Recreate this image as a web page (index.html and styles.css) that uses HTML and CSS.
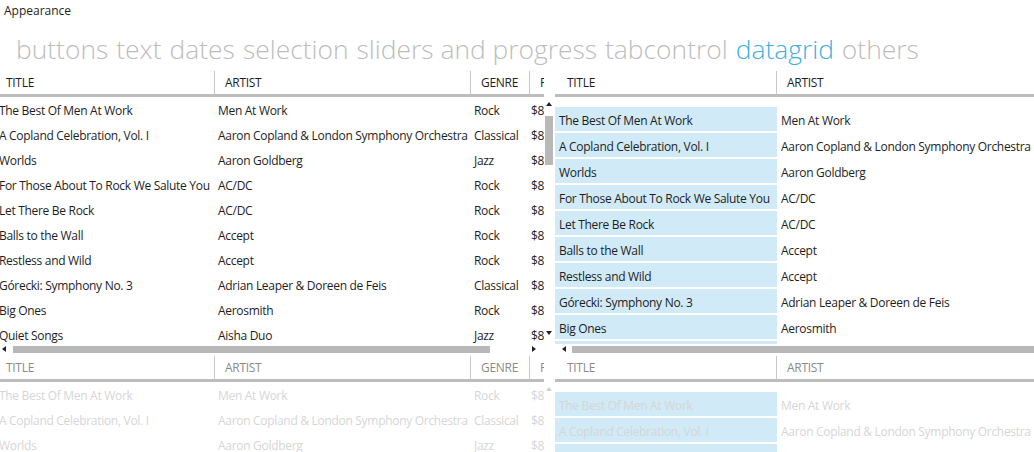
FILE: index.html
```html
<!DOCTYPE html>
<html lang="en">
<head>
  <meta charset="UTF-8" />
  <title>Appearance</title>
  <link rel="stylesheet" href="styles.css">
</head>
<body>
  <!-- Window title -->
  <div class="app-title">Appearance</div>
  <!-- Pivot headers -->
  <nav class="pivot">
    <span>buttons</span>
    <span>text</span>
    <span>dates</span>
    <span>selection</span>
    <span>sliders and progress</span>
    <span>tabcontrol</span>
    <span class="active">datagrid</span>
    <span>others</span>
  </nav>
  <main class="grids">
    <!-- Albums grid, plain -->
    <section class="grid albums">
      <div class="head"><div class="cols">
        <div class="hc c-title">TITLE</div><div class="hc c-artist">ARTIST</div><div class="hc c-genre">GENRE</div><div class="hc c-price">PRICE</div>
      </div></div>
      <div class="corner"></div>
      <div class="body"><div class="cols-wrap">
        <div class="row"><div class="c-title">The Best Of Men At Work</div><div class="c-artist">Men At Work</div><div class="c-genre">Rock</div><div class="c-price">$8.99</div></div>
        <div class="row"><div class="c-title">A Copland Celebration, Vol. I</div><div class="c-artist">Aaron Copland &amp; London Symphony Orchestra</div><div class="c-genre">Classical</div><div class="c-price">$8.99</div></div>
        <div class="row"><div class="c-title">Worlds</div><div class="c-artist">Aaron Goldberg</div><div class="c-genre">Jazz</div><div class="c-price">$8.99</div></div>
        <div class="row"><div class="c-title">For Those About To Rock We Salute You</div><div class="c-artist">AC/DC</div><div class="c-genre">Rock</div><div class="c-price">$8.99</div></div>
        <div class="row"><div class="c-title">Let There Be Rock</div><div class="c-artist">AC/DC</div><div class="c-genre">Rock</div><div class="c-price">$8.99</div></div>
        <div class="row"><div class="c-title">Balls to the Wall</div><div class="c-artist">Accept</div><div class="c-genre">Rock</div><div class="c-price">$8.99</div></div>
        <div class="row"><div class="c-title">Restless and Wild</div><div class="c-artist">Accept</div><div class="c-genre">Rock</div><div class="c-price">$8.99</div></div>
        <div class="row"><div class="c-title">Górecki: Symphony No. 3</div><div class="c-artist">Adrian Leaper &amp; Doreen de Feis</div><div class="c-genre">Classical</div><div class="c-price">$8.99</div></div>
        <div class="row"><div class="c-title">Big Ones</div><div class="c-artist">Aerosmith</div><div class="c-genre">Rock</div><div class="c-price">$8.99</div></div>
        <div class="row"><div class="c-title">Quiet Songs</div><div class="c-artist">Aisha Duo</div><div class="c-genre">Jazz</div><div class="c-price">$8.99</div></div>
      </div></div>
      <div class="vscroll">
        <span class="arrow up"></span>
        <span class="vthumb"></span>
        <span class="arrow down"></span>
      </div>
      <div class="hscroll">
        <span class="arrow left"></span>
        <span class="hthumb"></span>
        <span class="arrow right"></span>
      </div>
      <div class="corner"></div>
    </section>

    <!-- Tiles grid, plain -->
    <section class="grid tiles">
      <div class="head"><div class="cols">
        <div class="hc t-title">TITLE</div><div class="hc t-artist">ARTIST</div>
      </div></div>
      <div class="body">
        <div class="row"><div class="t-title">The Best Of Men At Work</div><div class="t-artist">Men At Work</div></div>
        <div class="row"><div class="t-title">A Copland Celebration, Vol. I</div><div class="t-artist">Aaron Copland &amp; London Symphony Orchestra</div></div>
        <div class="row"><div class="t-title">Worlds</div><div class="t-artist">Aaron Goldberg</div></div>
        <div class="row"><div class="t-title">For Those About To Rock We Salute You</div><div class="t-artist">AC/DC</div></div>
        <div class="row"><div class="t-title">Let There Be Rock</div><div class="t-artist">AC/DC</div></div>
        <div class="row"><div class="t-title">Balls to the Wall</div><div class="t-artist">Accept</div></div>
        <div class="row"><div class="t-title">Restless and Wild</div><div class="t-artist">Accept</div></div>
        <div class="row"><div class="t-title">Górecki: Symphony No. 3</div><div class="t-artist">Adrian Leaper &amp; Doreen de Feis</div></div>
        <div class="row"><div class="t-title">Big Ones</div><div class="t-artist">Aerosmith</div></div>
        <div class="row"><div class="t-title"></div><div class="t-artist"></div></div>
      </div>
      <div class="hscroll">
        <span class="arrow left"></span>
        <span class="hthumb"></span>
      </div>
    </section>

    <!-- Albums grid, disabled -->
    <section class="grid albums disabled">
      <div class="head"><div class="cols">
        <div class="hc c-title">TITLE</div><div class="hc c-artist">ARTIST</div><div class="hc c-genre">GENRE</div><div class="hc c-price">PRICE</div>
      </div></div>
      <div class="corner"></div>
      <div class="body"><div class="cols-wrap">
        <div class="row"><div class="c-title">The Best Of Men At Work</div><div class="c-artist">Men At Work</div><div class="c-genre">Rock</div><div class="c-price">$8.99</div></div>
        <div class="row"><div class="c-title">A Copland Celebration, Vol. I</div><div class="c-artist">Aaron Copland &amp; London Symphony Orchestra</div><div class="c-genre">Classical</div><div class="c-price">$8.99</div></div>
        <div class="row"><div class="c-title">Worlds</div><div class="c-artist">Aaron Goldberg</div><div class="c-genre">Jazz</div><div class="c-price">$8.99</div></div>
      </div></div>
      <div class="vscroll">
        <span class="arrow up"></span>
      </div>
    </section>

    <!-- Tiles grid, disabled -->
    <section class="grid tiles disabled">
      <div class="head"><div class="cols">
        <div class="hc t-title">TITLE</div><div class="hc t-artist">ARTIST</div>
      </div></div>
      <div class="body">
        <div class="row"><div class="t-title">The Best Of Men At Work</div><div class="t-artist">Men At Work</div></div>
        <div class="row"><div class="t-title">A Copland Celebration, Vol. I</div><div class="t-artist">Aaron Copland &amp; London Symphony Orchestra</div></div>
        <div class="row"><div class="t-title"></div><div class="t-artist"></div></div>
      </div>
    </section>
  </main>
</body>
</html>
```

FILE: styles.css
```css
html, body {
  height: 100%;
}
body {
  margin: 0;
  font-family: "Open Sans", "Noto Sans", sans-serif;
  font-size: 12px;
  letter-spacing: -0.3px;
  color: #1e1e1e;
  background: #fff;
  overflow: hidden;
}
.app-title {
  padding: 3px 4px;
  line-height: 16px;
  letter-spacing: 0;
}
/* Pivot headers */
.pivot {
  display: flex;
  gap: 8px;
  height: 49px;
  padding: 5px 0 0 16px;
  box-sizing: border-box;
  font-size: 26.4px;
  font-weight: 300;
  line-height: 44px;
  letter-spacing: 0;
  color: #bdbdbd;
  white-space: nowrap;
}
.pivot .active {
  color: #3fb0e3;
}
/* Grid layout */
.grids {
  display: grid;
  grid-template-columns: 553px 1fr;
  grid-template-rows: 285px 96px;
  column-gap: 2px;
}
.grid {
  display: grid;
  grid-template-rows: 26px 247px 10px;
  overflow: hidden;
  min-width: 0;
}
.grid.disabled {
  grid-template-rows: 26px 70px;
}
.grid.albums {
  grid-template-columns: 544px 9px;
}
.grid.tiles {
  grid-template-columns: 1fr;
}
.head {
  border-bottom: 3px solid #bdbdbd;
  overflow: hidden;
  white-space: nowrap;
}
.cols {
  display: flex;
  height: 23px;
  line-height: 23px;
}
.albums .cols,
.albums .cols-wrap {
  margin-left: -4px;
}
.hc {
  flex: none;
  box-sizing: border-box;
  padding-left: 10px;
  border-right: 1px solid #c8c8c8;
  overflow: hidden;
}
.body {
  overflow: hidden;
  white-space: nowrap;
}
.albums .body {
  padding-top: 1px;
}
.tiles .body {
  padding-top: 10px;
}
.row {
  display: flex;
  height: 25px;
  line-height: 25px;
}
.row > div {
  flex: none;
  box-sizing: border-box;
  padding-left: 3px;
  overflow: hidden;
}
/* Album columns (price is cut by the scroll viewport) */
.c-title { width: 219px; }
.c-artist { width: 256px; }
.c-genre { width: 59px; }
.c-price { width: 14px; }
.hc.c-price { border-right: none; }
.row .c-price { padding-left: 1px; }
/* Tile columns */
.tiles .row {
  height: 26px;
  line-height: 24px;
}
.t-title { width: 222px; }
.t-artist { width: 300px; }
.hc.t-title {
  padding-left: 12px;
}
.hc.t-artist {
  border-right: none;
}
.tiles .row > div {
  padding-top: 2px;
}
.row .t-title {
  background: #d0eaf7;
  border-bottom: 2px solid #fff;
  padding-left: 4px;
}
.row .t-artist {
  padding-left: 4px;
}
/* Scrollbars */
.vscroll {
  position: relative;
}
.vthumb {
  position: absolute;
  left: 1px;
  top: 19px;
  width: 8px;
  height: 49px;
  background: #b8b8b8;
}
.hscroll {
  display: flex;
  align-items: center;
  height: 10px;
}
.hthumb {
  height: 7px;
  background: #b8b8b8;
}
.albums .hscroll {
  padding-left: 2px;
}
.albums .hthumb {
  width: 477px;
  margin-left: 7px;
}
.tiles .hscroll {
  padding-left: 7px;
}
.tiles .hthumb {
  flex: 1;
  margin-left: 6px;
}
.arrow {
  display: block;
  width: 0;
  height: 0;
}
.arrow.left {
  border-top: 3px solid transparent;
  border-bottom: 3px solid transparent;
  border-right: 4px solid #222;
}
.arrow.right {
  margin-left: auto;
  margin-right: 8px;
  border-top: 3px solid transparent;
  border-bottom: 3px solid transparent;
  border-left: 4px solid #222;
}
.arrow.up,
.arrow.down {
  position: absolute;
  left: 2px;
  border-left: 3px solid transparent;
  border-right: 3px solid transparent;
}
.arrow.up {
  top: 5px;
  border-bottom: 4px solid #222;
}
.arrow.down {
  top: 234px;
  border-top: 4px solid #222;
}
/* Disabled state */
.disabled .hc {
  color: #8a8a8a;
}
.disabled .row {
  color: #d6d6d6;
}
.disabled .arrow.up {
  border-bottom-color: #d0d0d0;
}
```
